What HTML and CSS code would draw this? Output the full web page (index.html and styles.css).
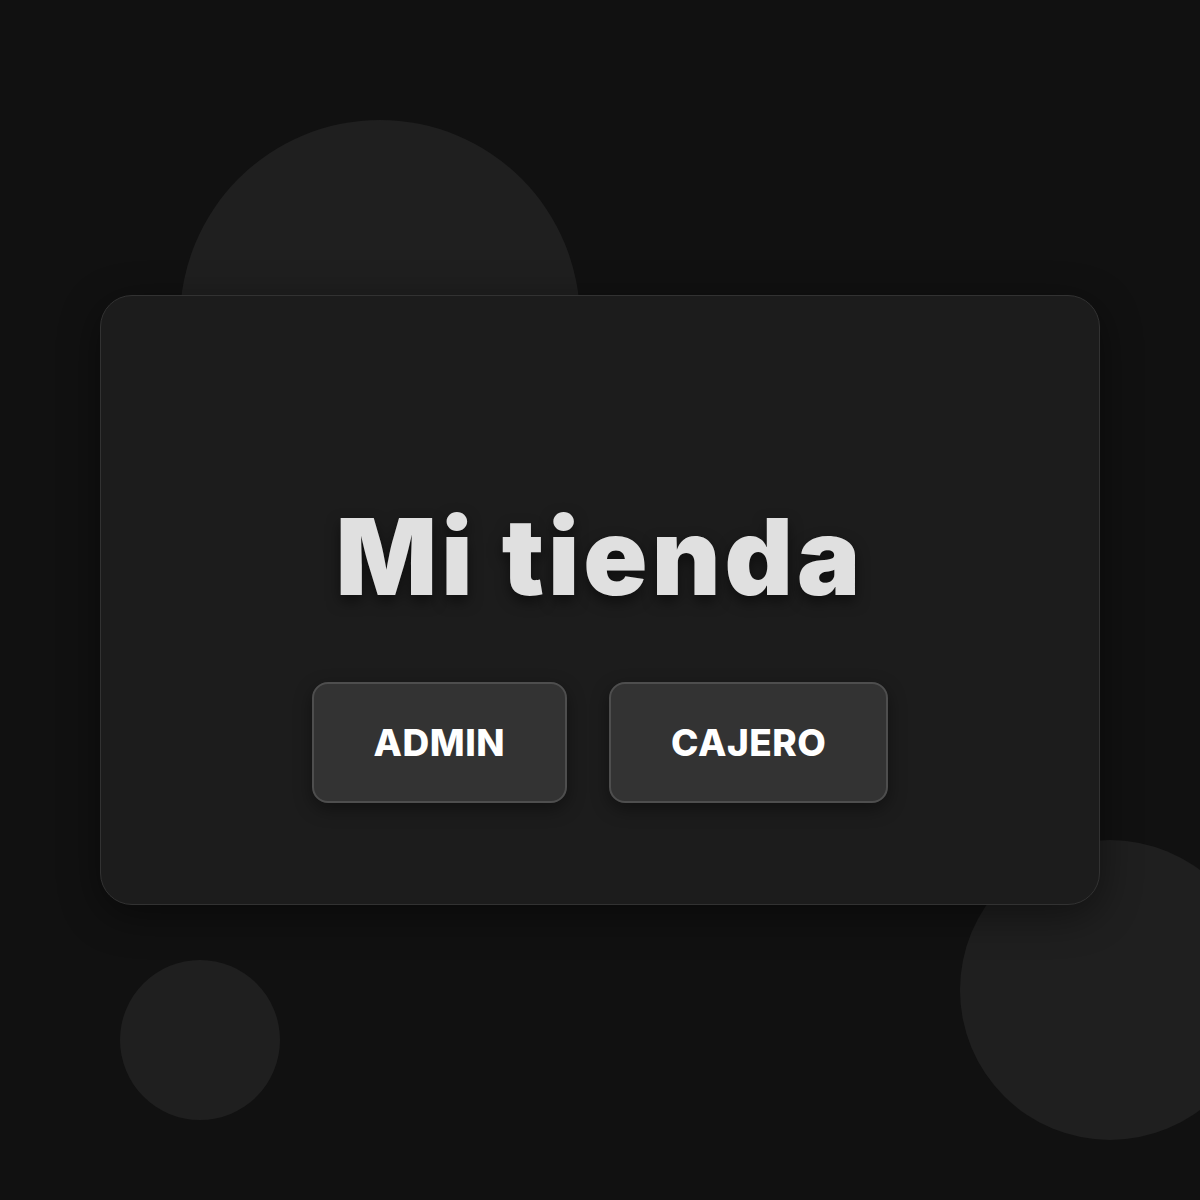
FILE: index.html
```html
<!DOCTYPE html>
<html lang="es">
<head>
<meta charset="utf-8">
<title>Mi tienda</title>
<link rel="stylesheet" href="styles.css">
</head>
<body>
<div class="bg-circle c1"></div>
<div class="bg-circle c2"></div>
<div class="bg-circle c3"></div>
<main class="card">
  <h1 class="title">Mi tienda</h1>
  <div class="actions">
    <button class="btn btn-admin">ADMIN</button>
    <button class="btn btn-cajero">CAJERO</button>
  </div>
</main>
</body>
</html>
```

FILE: styles.css
```css
* { box-sizing: border-box; }
html, body { margin: 0; padding: 0; }
body {
  width: 1200px;
  height: 1200px;
  background: #111111;
  overflow: hidden;
  position: relative;
  display: flex;
  align-items: center;
  justify-content: center;
  font-family: "Inter", "Liberation Sans", sans-serif;
}
.bg-circle {
  position: absolute;
  border-radius: 50%;
  background: #1f1f1f;
}
.c1 { left: 180px; top: 120px; width: 400px; height: 400px; }
.c2 { left: 960px; top: 840px; width: 300px; height: 300px; }
.c3 { left: 120px; top: 960px; width: 160px; height: 160px; }
.card {
  position: relative;
  width: 1000px;
  height: 610px;
  background: #1c1c1c;
  border: 1px solid #323232;
  border-radius: 32px;
  box-shadow: 0 10px 40px rgba(0,0,0,0.45);
  display: flex;
  flex-direction: column;
  align-items: center;
  justify-content: center;
  padding-top: 106px;
}
.title {
  margin: 0;
  font-size: 106px;
  font-weight: 900;
  line-height: 1;
  color: #e0e0e0;
  letter-spacing: 4px;
  text-shadow: 0 6px 14px rgba(0,0,0,0.5);
}
.actions {
  display: flex;
  gap: 42px;
  margin-top: 72px;
}
.btn {
  height: 121px;
  padding: 0 60px;
  background: #333333;
  border: 2px solid #4e4e4e;
  border-radius: 16px;
  color: #ffffff;
  font-family: "Inter", "Liberation Sans", sans-serif;
  font-weight: 800;
  font-size: 37px;
  letter-spacing: 0.5px;
  box-shadow: 0 6px 18px rgba(0,0,0,0.4);
}
```
